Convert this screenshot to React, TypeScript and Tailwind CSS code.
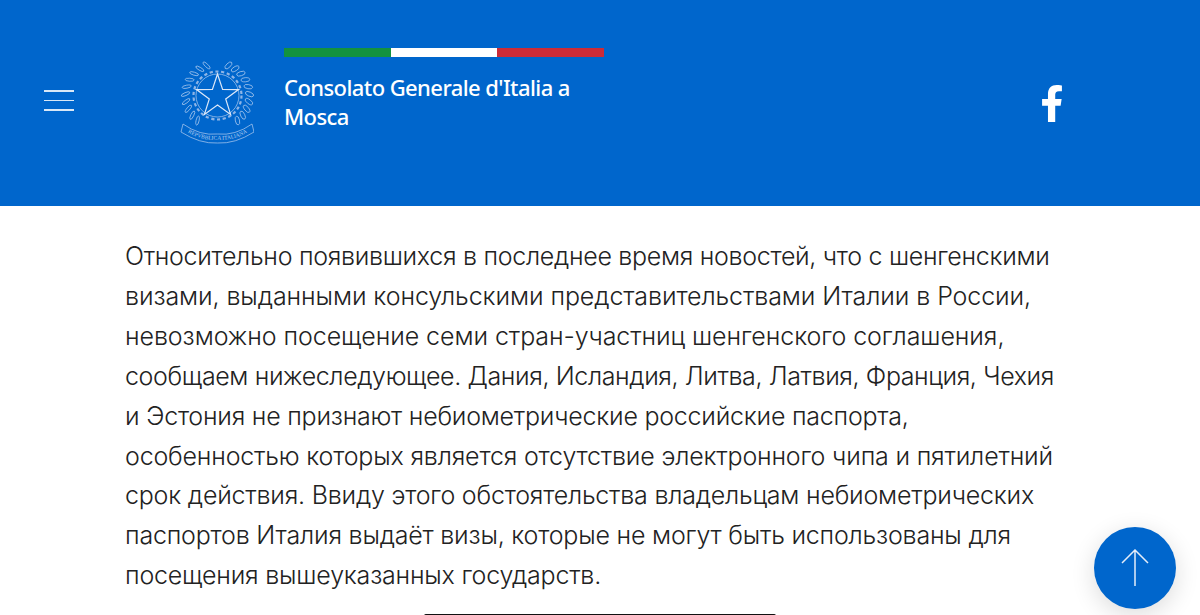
import React from 'react';
import { FaFacebookF } from 'react-icons/fa';

// tracking tuned per line, the original font has slightly different widths
const lines = [
  { text: 'Относительно появившихся в последнее время новостей, что с шенгенскими', cls: 'tracking-[-0.3px]' },
  { text: 'визами, выданными консульскими представительствами Италии в России,', cls: 'tracking-[-0.09px]' },
  { text: 'невозможно посещение семи стран-участниц шенгенского соглашения,', cls: 'tracking-[-0.07px]' },
  { text: 'сообщаем нижеследующее. Дания, Исландия, Литва, Латвия, Франция, Чехия', cls: 'tracking-[-0.39px]' },
  { text: 'и Эстония не признают небиометрические российские паспорта,', cls: 'tracking-[-0.23px]' },
  { text: 'особенностью которых является отсутствие электронного чипа и пятилетний', cls: 'tracking-[-0.18px]' },
  { text: 'срок действия. Ввиду этого обстоятельства владельцам небиометрических', cls: 'tracking-[-0.21px]' },
  { text: 'паспортов Италия выдаёт визы, которые не могут быть использованы для', cls: 'tracking-[-0.2px]' },
  { text: 'посещения вышеуказанных государств.', cls: 'tracking-[-0.21px]' },
];

const STAR = 'M37.5 14 L42.6 29.5 L58.5 29.6 L45.7 39 L50.6 54.4 L37.5 45 L24.4 54.4 L29.3 39 L16.5 29.6 L32.4 29.5 Z';

const Emblem = () => {
  const angles = Array.from({ length: 10 }, (_, i) => 16 + i * 13.5);
  return (
    <svg viewBox="0 0 74 86" className="w-[74px] h-[86px]" fill="none" stroke="#b4cef0" strokeWidth="0.7">
      {/* gear */}
      <circle cx="37.5" cy="35.5" r="24" strokeDasharray="3.2 2.6" strokeWidth="2.2" stroke="#8fb5e6" />
      <circle cx="37.5" cy="35.5" r="21.5" />
      <path d={STAR} stroke="#dce8f9" strokeWidth="1.2" />
      <path d="M37.5 14 V45 M16.5 29.6 L37.5 45 M58.5 29.6 L37.5 45" strokeWidth="0" />
      {/* wreath */}
      {angles.map((deg) => {
        const left = (Math.PI / 180) * (90 + deg + 4);
        const right = (Math.PI / 180) * (90 - deg - 4);
        const lx = 37.5 + Math.cos(left) * 32;
        const ly = 35.5 + Math.sin(left) * -32;
        const rx = 37.5 + Math.cos(right) * 32;
        const ry = 35.5 + Math.sin(right) * -32;
        return (
          <g key={deg}>
            <ellipse cx={lx} cy={ly} rx="1.5" ry="4.6" transform={`rotate(${-deg - 30} ${lx} ${ly})`} />
            <ellipse cx={rx} cy={ry} rx="2.1" ry="4.4" transform={`rotate(${deg + 30} ${rx} ${ry})`} />
          </g>
        );
      })}
      {/* ribbon */}
      <path d="M3 64 Q20 76 37.5 74 Q55 76 72 64 L74 72 Q55 84 37.5 83 Q20 84 1 72 Z" fill="#0066cc" />
      <path id="ribbon-curve" d="M4 70 Q20 81 37.5 79.5 Q55 81 71 70" stroke="none" />
      <text fontSize="5.6" fill="#b4cef0" stroke="none" fontFamily="Liberation Serif, serif" textAnchor="middle">
        <textPath href="#ribbon-curve" startOffset="50%">
          REPVBBLICA ITALIANA
        </textPath>
      </text>
    </svg>
  );
};

const App = () => {
  return (
    <div className="h-[615px] w-[1200px] bg-white overflow-hidden relative font-['Inter',sans-serif]">
      {/* header */}
      <header className="h-[206px] bg-[#0066cc] flex items-start text-white">
        <div className="w-[30px] mt-[90px] ml-[44px] flex flex-col gap-[8px] shrink-0">
          <span className="block h-[1.5px] bg-white/85" />
          <span className="block h-[1.5px] bg-white/85" />
          <span className="block h-[1.5px] bg-white/85" />
        </div>
        <div className="ml-[106px] mt-[60px] shrink-0">
          <Emblem />
        </div>
        <div className="ml-[30px] mt-[48px] w-[320px] shrink-0">
          <div className="flex h-[9px]">
            <span className="flex-1 bg-[#13923f]" />
            <span className="flex-1 bg-white" />
            <span className="flex-1 bg-[#cd2b37]" />
          </div>
          <p className="mt-[16px] text-[22px] leading-[29px] font-medium font-['Noto_Sans',sans-serif] tracking-[-0.58px]">
            Consolato Generale d'Italia a
            <br />
            Mosca
          </p>
        </div>
        <FaFacebookF className="ml-[435px] mt-[85px] w-[26px] h-[37px]" />
      </header>

      {/* text */}
      <main className="pl-[125px] pt-[31px]">
        <p className="text-[25px] leading-[39.9px] text-[#222222] font-light whitespace-nowrap">
          {lines.map((line) => (
            <span key={line.text} className={`block ${line.cls}`}>
              {line.text}
            </span>
          ))}
        </p>
        <div className="mt-[18px] ml-[299px] w-[352px] h-[2px] bg-[#111111] rounded-t-md" />
      </main>

      {/* back to top */}
      <button className="absolute left-[1094px] top-[527px] w-[82px] h-[82px] rounded-full bg-[#0066cc] flex items-center justify-center shadow-[0_6px_24px_rgba(0,0,0,0.14)]">
        <svg viewBox="0 0 28 38" className="w-[28px] h-[38px]" fill="none" stroke="#e4edf9" strokeWidth="1.5">
          <path d="M1 14 L14 1 L27 14 M14 1 V37" />
        </svg>
      </button>
    </div>
  );
};

export default App;
